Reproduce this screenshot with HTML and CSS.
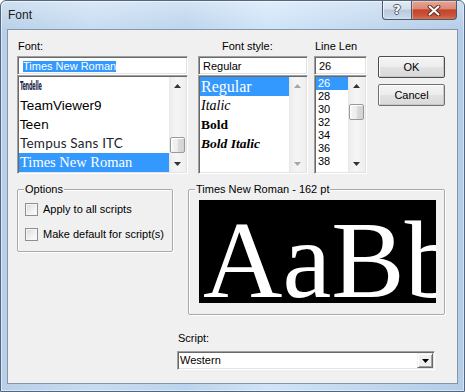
FILE: index.html
```html
<!DOCTYPE html>
<html>
<head>
<meta charset="utf-8">
<title>Font</title>
<link rel="stylesheet" href="styles.css">
</head>
<body>
<div class="window">
  <div class="titlebar">
    <span class="title">Font</span>
    <div class="caption">
      <div class="cap-help"><span>?</span></div>
      <div class="cap-close">
        <svg width="14" height="11" viewBox="0 0 14 11"><path d="M2.5 1.5 L11.5 9.5 M11.5 1.5 L2.5 9.5" stroke="#5a2a22" stroke-width="3.8" stroke-linecap="round" fill="none"/><path d="M2.5 1.5 L11.5 9.5 M11.5 1.5 L2.5 9.5" stroke="#ffffff" stroke-width="2" stroke-linecap="round" fill="none"/></svg>
      </div>
    </div>
  </div>
  <div class="client">
    <div class="top-row">
      <div class="col col-font">
        <div class="lbl">Font:</div>
        <div class="edit"><span class="sel">Times New Roman</span></div>
        <div class="listbox">
          <div class="items">
            <div class="item"><span class="f-tendelle">Tendelle</span></div>
            <div class="item f-teamviewer">TeamViewer9</div>
            <div class="item f-teen">Teen</div>
            <div class="item f-tempus">Tempus Sans ITC</div>
            <div class="item f-times on">Times New Roman</div>
          </div>
          <div class="vscroll">
            <div class="sb-arrow"><svg width="7" height="4" viewBox="0 0 7 4"><path d="M0 4 L3.5 0 L7 4Z" fill="#333"/></svg></div>
            <div class="sb-track"><div class="sb-thumb thumb-font"></div></div>
            <div class="sb-arrow"><svg width="7" height="4" viewBox="0 0 7 4"><path d="M0 0 L3.5 4 L7 0Z" fill="#333"/></svg></div>
          </div>
        </div>
      </div>
      <div class="col col-style">
        <div class="lbl lbl-style">Font style:</div>
        <div class="edit"><span class="txt">Regular</span></div>
        <div class="listbox">
          <div class="items">
            <div class="item s-regular on">Regular</div>
            <div class="item s-italic">Italic</div>
            <div class="item s-bold">Bold</div>
            <div class="item s-bolditalic">Bold Italic</div>
          </div>
          <div class="vscroll">
            <div class="sb-arrow"><svg width="7" height="4" viewBox="0 0 7 4"><path d="M0 4 L3.5 0 L7 4Z" fill="#a6a6a6"/></svg></div>
            <div class="sb-track"></div>
            <div class="sb-arrow"><svg width="7" height="4" viewBox="0 0 7 4"><path d="M0 0 L3.5 4 L7 0Z" fill="#a6a6a6"/></svg></div>
          </div>
        </div>
      </div>
      <div class="col col-size">
        <div class="lbl">Line Len</div>
        <div class="edit"><span class="txt">26</span></div>
        <div class="listbox">
          <div class="items">
            <div class="item num on">26</div>
            <div class="item num">28</div>
            <div class="item num">30</div>
            <div class="item num">32</div>
            <div class="item num">34</div>
            <div class="item num">36</div>
            <div class="item num">38</div>
          </div>
          <div class="vscroll">
            <div class="sb-arrow"><svg width="7" height="4" viewBox="0 0 7 4"><path d="M0 4 L3.5 0 L7 4Z" fill="#333"/></svg></div>
            <div class="sb-track"><div class="sb-thumb thumb-size"></div></div>
            <div class="sb-arrow"><svg width="7" height="4" viewBox="0 0 7 4"><path d="M0 0 L3.5 4 L7 0Z" fill="#333"/></svg></div>
          </div>
        </div>
      </div>
      <div class="col col-btns">
        <div class="btn btn-default">OK</div>
        <div class="btn">Cancel</div>
      </div>
    </div>

    <div class="mid-row">
      <div class="group options">
        <span class="group-lbl">Options</span>
        <div class="chk-row"><span class="chk"></span><span>Apply to all scripts</span></div>
        <div class="chk-row"><span class="chk"></span><span>Make default for script(s)</span></div>
      </div>
      <div class="group preview">
        <span class="group-lbl">Times New Roman - 162 pt</span>
        <div class="sample"><span class="sample-text">AaBb</span></div>
      </div>
    </div>

    <div class="script-row">
      <div class="lbl script-lbl">Script:</div>
      <div class="combo">
        <span class="combo-text">Western</span>
        <span class="combo-btn"><svg width="7" height="4" viewBox="0 0 7 4"><path d="M0 0 L3.5 4 L7 0Z" fill="#000"/></svg></span>
      </div>
    </div>
  </div>
</div>
</body>
</html>
```
FILE: styles.css
```css
* { box-sizing: border-box; margin: 0; padding: 0; }
html, body { width: 465px; height: 392px; overflow: hidden; background: #ffffff; }
body { font-family: "Liberation Sans", Arial, sans-serif; font-size: 11px; color: #000; }

.window {
  width: 465px; height: 392px;
  border: 1px solid #52677f;
  border-radius: 6px 6px 0 0;
  background:
    linear-gradient(180deg, rgba(255,255,255,0.35) 0, rgba(255,255,255,0) 30px),
    linear-gradient(90deg, #b7cfe8 0%, #c6dcf2 20%, #bcd4ed 40%, #cfe4f8 58%, #c0d7ef 80%, #b4cce6 100%);
  box-shadow: inset 1px 1px 0 rgba(255,255,255,0.55), inset -1px -1px 0 rgba(255,255,255,0.45);
  padding: 0 6px 7px 6px;
  display: flex; flex-direction: column;
}

.titlebar { height: 28px; display: flex; justify-content: space-between; align-items: flex-start; padding-left: 1px; }
.title { font-size: 12px; margin-top: 7px; color: #1a1a1a; }
.caption { display: flex; margin-right: 1px; }
.cap-help, .cap-close {
  height: 19px; border: 1px solid #4a5a6e; border-top: none;
  display: flex; align-items: center; justify-content: center;
}
.cap-help {
  width: 29px; border-right: none; border-radius: 0 0 0 4px;
  background: linear-gradient(180deg, #e4ebf4 0%, #d4dfeb 45%, #b9c9dc 50%, #c6d5e6 85%, #d3e1ef 100%);
  box-shadow: inset 1px 1px 0 rgba(255,255,255,0.6);
}
.cap-help span {
  font: bold 13px "DejaVu Sans", sans-serif; color: #fff;
  text-shadow: 1px 0 0 #4c5c70, -1px 0 0 #4c5c70, 0 1px 0 #4c5c70, 0 -1px 0 #4c5c70;
  margin-top: -1px;
}
.cap-close {
  width: 46px; border-radius: 0 0 4px 0;
  background: linear-gradient(180deg, #e8a595 0%, #db8a75 42%, #c4432c 50%, #c85438 80%, #d9724f 100%);
  box-shadow: inset 1px 1px 0 rgba(255,255,255,0.35);
}

.client {
  flex: 1;
  background: #f0f0f0;
  border: 1px solid #8596aa;
  padding: 10px 0 0 9px;
  display: flex; flex-direction: column;
}

.top-row { display: flex; align-items: flex-start; }
.col { display: flex; flex-direction: column; }
.col-font { width: 171px; }
.col-style { width: 110px; margin-left: 10px; }
.col-size { width: 53px; margin-left: 6px; }
.col-btns { width: 67px; margin-left: 11px; padding-top: 16px; gap: 6px; }

.lbl { height: 16px; line-height: 13px; padding-left: 1px; white-space: nowrap; }
.lbl-style { padding-left: 24px; }

.edit, .listbox, .combo {
  background: #fff;
  border: 1px solid; border-color: #a0a0a0 #ffffff #ffffff #a0a0a0;
  box-shadow: inset 1px 1px 0 #696969, inset -1px -1px 0 #e3e3e3;
}
.edit { height: 19px; padding: 3px 2px 0 4px; white-space: nowrap; overflow: hidden; }
.edit .txt { display: block; line-height: 12px; padding-left: 0; }
.sel { display: inline-block; line-height: 11px; height: 11px; background: #3399ff; color: #fff; margin-left: 1px; }

.listbox { height: 99px; padding: 1px; display: flex; }
.items { flex: 1; overflow: hidden; display: flex; flex-direction: column; }
.item { flex: none; height: 19px; line-height: 19px; padding-left: 1px; white-space: nowrap; overflow: hidden; }
.item.on { background: #3399ff; color: #fff; }

.f-tendelle { display: inline-block; font: bold 13px "DejaVu Sans Condensed", "DejaVu Sans", sans-serif; color: #17234a; transform: scaleX(0.42); transform-origin: left center; letter-spacing: -0.4px; }
.f-teamviewer { font-size: 13.5px; }
.f-teen { font-family: "DejaVu Sans", sans-serif; font-size: 12.5px; }
.f-tempus { font-family: "Lato", "Liberation Sans", sans-serif; font-weight: 400; font-size: 13.5px; color: #1a1f2e; letter-spacing: 0.2px; }
.f-times { font-family: "Liberation Serif", "Times New Roman", serif; font-size: 14.5px; }

.s-regular, .s-italic, .s-bold, .s-bolditalic { font-family: "Liberation Serif", "Times New Roman", serif; }
.s-regular { font-size: 16px; }
.s-italic { font-size: 14px; font-style: italic; }
.s-bold { font-size: 13.5px; font-weight: bold; }
.s-bolditalic { font-size: 13.5px; font-weight: bold; font-style: italic; }

.item.num { height: 13px; line-height: 13px; font-size: 11px; padding-left: 2px; }

.vscroll {
  width: 17px; flex: none; display: flex; flex-direction: column;
  background: linear-gradient(90deg, #e6e6e6 0, #efefef 2px, #f5f5f5 50%, #eeeeee 100%);
}
.sb-arrow { height: 17px; flex: none; display: flex; align-items: center; justify-content: center; }
.sb-track { flex: 1; }
.sb-thumb {
  width: 15px; height: 16px; margin-left: 1px;
  border: 1px solid #999999; border-radius: 2px;
  background: linear-gradient(90deg, #f6f6f6 0%, #ececec 50%, #dcdcdc 51%, #d2d2d2 100%);
  box-shadow: inset 1px 1px 0 #ffffff;
}
.thumb-font { margin-top: 43px; }
.thumb-size { margin-top: 10px; }

.btn {
  height: 22px;
  border: 1px solid #707070; border-radius: 2px;
  background: linear-gradient(180deg, #f4f4f4 0%, #ededed 50%, #e2e2e2 51%, #d9d9d9 100%);
  box-shadow: inset 1px 1px 0 #fdfdfd, inset -1px -1px 0 #c8c8c8;
  display: flex; align-items: center; justify-content: center;
}
.btn-default { border-color: #4d4d4d; }

.mid-row { display: flex; align-items: flex-start; margin-top: 15px; }
.group {
  position: relative;
  border: 1px solid #a9a9a9; border-radius: 2px;
  box-shadow: 1px 1px 0 #ffffff, inset 1px 1px 0 #ffffff;
}
.group-lbl {
  position: absolute; top: -7px; left: 6px;
  padding: 0 1px; background: #f0f0f0; line-height: 13px; white-space: nowrap;
}
.options { width: 156px; height: 63px; padding: 13px 0 0 7px; display: flex; flex-direction: column; gap: 12px; }
.chk-row { display: flex; align-items: center; gap: 5px; height: 13px; line-height: 13px; }
.chk {
  width: 13px; height: 13px; flex: none;
  border: 1px solid #8e8f8f;
  background: linear-gradient(135deg, #dadada 0%, #f2f2f2 60%, #ffffff 100%);
  box-shadow: inset 0 0 0 1px #f6f6f6;
}

.preview { width: 257px; height: 126px; margin-left: 15px; padding: 10px 0 0 10px; }
.sample {
  width: 237px; height: 103px; overflow: hidden;
  background: #000; color: #fff;
  font-family: "Liberation Serif", "Times New Roman", serif;
  font-size: 110px; line-height: 120px; white-space: nowrap;
  padding-left: 4px;
}
.sample-text { display: block; width: 260px; }

.script-row { margin-top: 17px; margin-left: 160px; display: flex; flex-direction: column; }
.script-lbl { height: 19px; }
.combo { width: 258px; height: 19px; padding: 1px; display: flex; }
.combo-text { flex: 1; padding-left: 1px; line-height: 15px; }
.combo-btn {
  width: 16px; flex: none;
  background: #f0f0f0;
  border: 1px solid; border-color: #f0f0f0 #696969 #696969 #f0f0f0;
  box-shadow: inset 1px 1px 0 #ffffff, inset -1px -1px 0 #a0a0a0;
  display: flex; align-items: center; justify-content: center;
}
```
